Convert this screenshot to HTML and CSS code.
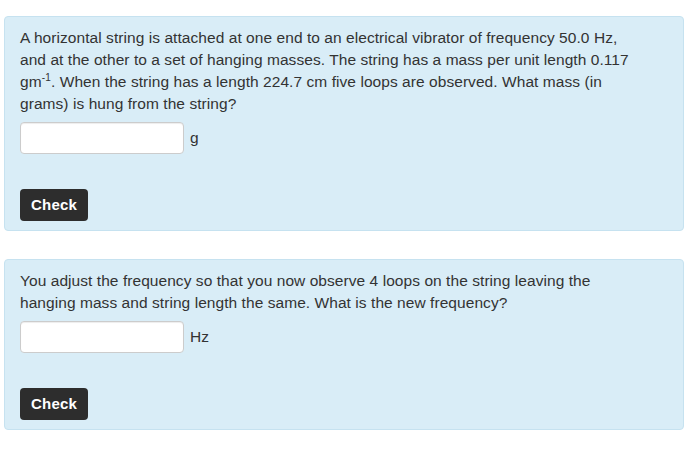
FILE: index.html
```html
<!DOCTYPE html>
<html>
<head>
<meta charset="utf-8">
<link rel="stylesheet" href="styles.css">
</head>
<body>
<div class="page">
  <div class="card">
    <p class="question">A horizontal string is attached at one end to an electrical vibrator of frequency 50.0 Hz,<br>and at the other to a set of hanging masses. The string has a mass per unit length 0.117<br>gm<sup>-1</sup>. When the string has a length 224.7 cm five loops are observed. What mass (in<br>grams) is hung from the string?</p>
    <div class="answer">
      <input class="field" type="text">
      <span class="unit">g</span>
    </div>
    <button class="check">Check</button>
  </div>
  <div class="card">
    <p class="question">You adjust the frequency so that you now observe 4 loops on the string leaving the<br>hanging mass and string length the same. What is the new frequency?</p>
    <div class="answer">
      <input class="field" type="text">
      <span class="unit">Hz</span>
    </div>
    <button class="check">Check</button>
  </div>
</div>
</body>
</html>
```
FILE: styles.css
```css
html, body {
  margin: 0;
  padding: 0;
  background: #ffffff;
}
body {
  font-family: "Liberation Sans", Arial, sans-serif;
  font-size: 15.5px;
  letter-spacing: 0.06px;
  line-height: 22px;
  color: #333333;
}
.page {
  padding: 16px 16px 0 4px;
  display: flex;
  flex-direction: column;
  gap: 28px;
}
.card {
  width: 680px;
  box-sizing: border-box;
  background: #d9edf7;
  border: 1px solid #c6e2f0;
  border-radius: 4px;
  padding: 10px 15px 9px 15px;
}
.question {
  margin: 0;
  white-space: nowrap;
}
sup {
  font-size: 10px;
  letter-spacing: 0.2px;
  line-height: 1;
  vertical-align: 6px;
}
.answer {
  display: flex;
  align-items: center;
  gap: 6px;
  margin-top: 7px;
}
.field {
  width: 164px;
  height: 32px;
  box-sizing: border-box;
  margin: 0;
  border: 1px solid #cccccc;
  border-radius: 4px;
  background: #ffffff;
  box-shadow: inset 0 1px 1px rgba(0,0,0,0.075);
  font: inherit;
  padding: 4px 8px;
}
.unit {
  color: #333333;
}
.check {
  display: block;
  margin-top: 35px;
  height: 32px;
  padding: 0 11px;
  border: none;
  border-radius: 4px;
  background: #2d2d2d;
  color: #ffffff;
  font-family: "Liberation Sans", Arial, sans-serif;
  font-weight: bold;
  font-size: 15px;
  letter-spacing: 0.2px;
  line-height: 32px;
}
```
